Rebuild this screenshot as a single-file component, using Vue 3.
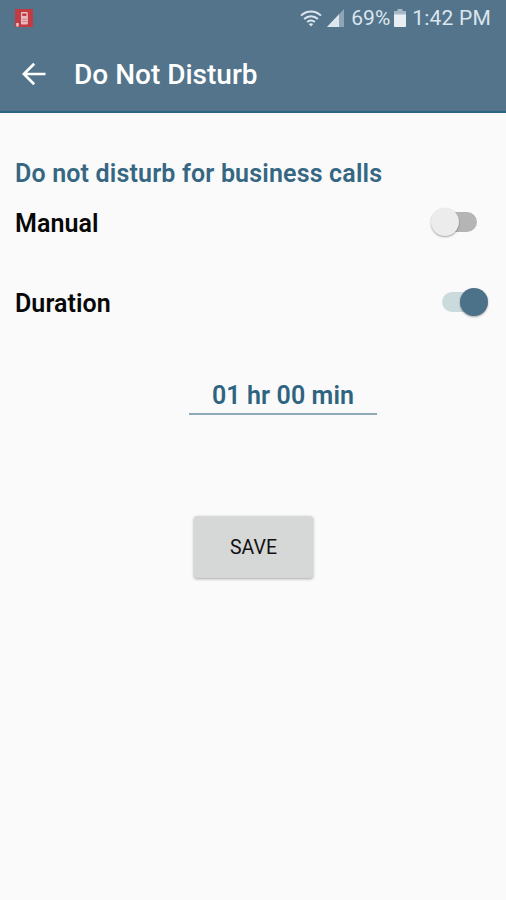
<script setup>
import { ref } from 'vue'

const manual = ref(false)
const timed = ref(true)
</script>

<template>
  <main class="screen">
    <header class="header">
      <div class="status">
        <svg class="app-icon" width="18" height="18" viewBox="0 0 18 18">
          <rect width="18" height="18" rx="1" fill="#c23b43" />
          <rect x="6" y="3" width="6.800" height="12.500" rx="1" fill="#e9bcc0" />
          <rect x="7.200" y="4.600" width="4.200" height="2.200" fill="#b52c36" />
          <path d="M7.200 10.200h4.400M7.200 12.600h4.400" stroke="#c9747c" stroke-width=".9" />
          <rect x="1.300" y="14" width="2.300" height="3.500" fill="#efd0d2" />
        </svg>
        <div class="indicators">
          <svg class="wifi" width="22" height="17" viewBox="0 0 22 17" fill="none" stroke="#dce6ee" stroke-width="2">
            <path d="M1 5.600C6.700.100 15.300.100 21 5.600" />
            <path d="M4.100 8.900C8 5.200 14 5.200 17.900 8.900" />
            <path d="M7.200 12C9.300 10 12.700 10 14.800 12" />
            <path d="M11 16.500 8.700 14Q11 12.300 13.300 14Z" fill="#dce6ee" stroke="none" />
          </svg>
          <svg class="signal" width="17" height="18" viewBox="0 0 17 18">
            <path d="M17 0V18H0Z" fill="#8ea5b6" />
            <path d="M12 5.300V18H0Z" fill="#dce6ee" />
          </svg>
          <span class="percent">69%</span>
          <svg class="battery" width="12" height="18" viewBox="0 0 12 18">
            <path d="M3.500 0h5v2H12v4H0V2h3.500Z" fill="#a5b8c5" />
            <path d="M0 5.500h12V17q0 1-1 1H1q-1 0-1-1Z" fill="#e8eff4" />
          </svg>
          <span class="clock">1:42 PM</span>
        </div>
      </div>
      <div class="appbar">
        <svg class="back" width="24" height="24" viewBox="0 0 24 24" fill="none" stroke="#fff" stroke-width="2.700">
          <path d="M23.500 12H2M12.200 1.700 1.900 12l10.300 10.300" />
        </svg>
        <h1 class="title">Do Not Disturb</h1>
      </div>
    </header>

    <section class="content">
      <h2 class="heading">Do not disturb for business calls</h2>
      <div class="row manual">
        <span class="label">Manual</span>
        <button class="switch" :class="{ on: manual }" role="switch" :aria-checked="manual" @click="manual = !manual">
          <span class="thumb"></span>
        </button>
      </div>
      <div class="row duration">
        <span class="label">Duration</span>
        <button class="switch" :class="{ on: timed }" role="switch" :aria-checked="timed" @click="timed = !timed">
          <span class="thumb"></span>
        </button>
      </div>
      <div class="time">01 hr 00 min</div>
      <button class="save">SAVE</button>
    </section>
  </main>
</template>

<style>
body {
  margin: 0;
  background: #fafafa;
}
</style>

<style scoped>
.screen {
  height: 900px;
  overflow: hidden;
  background: #fafafa;
  font-family: Roboto, sans-serif;
}
.header {
  box-sizing: border-box;
  height: 113px;
  background: #53748b;
  border-bottom: 2px solid #2b6680;
}
.status {
  display: flex;
  justify-content: space-between;
  align-items: center;
  height: 36px;
  padding: 0 15px;
}
.indicators {
  display: flex;
  align-items: center;
  color: #dce6ee;
  font-size: 21px;
  line-height: 36px;
}
.signal {
  margin-left: 5px;
}
.percent {
  margin-left: 7px;
}
.battery {
  margin-left: 4px;
}
.clock {
  margin-left: 6px;
  letter-spacing: 0.2px;
}
.appbar {
  display: flex;
  align-items: center;
  height: 76px;
  padding-left: 22px;
}
.title {
  margin: 2px 0 0 28px;
  color: #fff;
  font-size: 28px;
  font-weight: 500;
  line-height: 32px;
}
.content {
  display: flex;
  flex-direction: column;
  padding: 45px 18px 0 15px;
}
.heading {
  margin: 0;
  color: #356783;
  font-size: 25px;
  font-weight: 600;
  letter-spacing: 0.17px;
  line-height: 32px;
  white-space: nowrap;
}
.row {
  display: flex;
  justify-content: space-between;
  align-items: center;
  height: 34px;
}
.manual {
  margin-top: 16px;
  padding-right: 11px;
}
.duration {
  margin-top: 46px;
}
.label {
  color: #080808;
  font-size: 25px;
  font-weight: 600;
  letter-spacing: 0.08px;
}
.switch {
  display: flex;
  align-items: center;
  width: 35px;
  height: 20px;
  margin-top: -2px;
  padding: 0;
  border: 0;
  border-radius: 10px;
  background: #b5b5b5;
}
.thumb {
  flex: none;
  width: 28px;
  height: 28px;
  margin-left: -11px;
  border-radius: 50%;
  background: #ececec;
  box-shadow: 0 1px 2px rgba(0, 0, 0, 0.35);
}
.switch.on {
  width: 46px;
  background: linear-gradient(90deg, #cbdadd 35px, transparent 35px);
}
.switch.on .thumb {
  margin-left: 18px;
  background: #4c7289;
}
.time {
  align-self: flex-start;
  box-sizing: border-box;
  width: 188px;
  height: 40px;
  margin: 55px 0 0 174px;
  border-bottom: 2px solid #8fa9b9;
  color: #2f6480;
  font-size: 25px;
  font-weight: 600;
  letter-spacing: 0.1px;
  line-height: 41px;
  text-align: center;
}
.save {
  align-self: flex-start;
  width: 119px;
  height: 62px;
  margin: 101px 0 0 179px;
  padding: 0;
  border: 0;
  border-radius: 3px;
  background: #d6d8d7;
  box-shadow: 0 1px 3px rgba(0, 0, 0, 0.35);
  color: #111;
  font: 450 19.500px/64px Roboto, sans-serif;
}
</style>
